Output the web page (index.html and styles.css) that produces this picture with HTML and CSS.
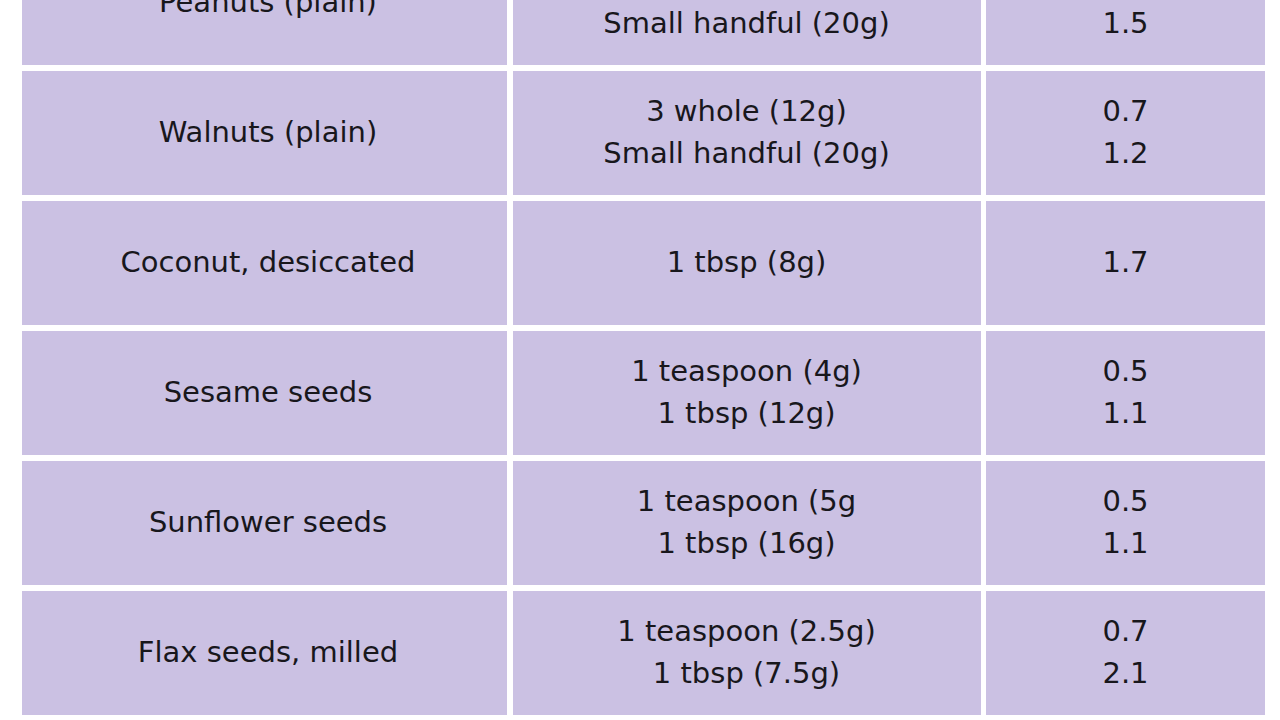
FILE: index.html
```html
<!DOCTYPE html>
<html lang="en">
<head>
<meta charset="utf-8">
<title>Nuts and seeds</title>
<link rel="stylesheet" href="styles.css">
</head>
<body>
<div class="table">
  <div class="cell name">Peanuts (plain)</div>
  <div class="cell"><span>10 whole (10g)</span><span>Small handful (20g)</span></div>
  <div class="cell"><span>0.8</span><span>1.5</span></div>

  <div class="cell name">Walnuts (plain)</div>
  <div class="cell"><span>3 whole (12g)</span><span>Small handful (20g)</span></div>
  <div class="cell"><span>0.7</span><span>1.2</span></div>

  <div class="cell name">Coconut, desiccated</div>
  <div class="cell">1 tbsp (8g)</div>
  <div class="cell">1.7</div>

  <div class="cell name">Sesame seeds</div>
  <div class="cell"><span>1 teaspoon (4g)</span><span>1 tbsp (12g)</span></div>
  <div class="cell"><span>0.5</span><span>1.1</span></div>

  <div class="cell name">Sunflower seeds</div>
  <div class="cell"><span>1 teaspoon (5g</span><span>1 tbsp (16g)</span></div>
  <div class="cell"><span>0.5</span><span>1.1</span></div>

  <div class="cell name">Flax seeds, milled</div>
  <div class="cell"><span>1 teaspoon (2.5g)</span><span>1 tbsp (7.5g)</span></div>
  <div class="cell"><span>0.7</span><span>2.1</span></div>
</div>
</body>
</html>
```
FILE: styles.css
```css
html, body {
  margin: 0;
  padding: 0;
  background: #ffffff;
  overflow: hidden;
}
body {
  font-family: "DejaVu Sans", "Noto Sans", sans-serif;
  color: #18171c;
}
.table {
  display: grid;
  grid-template-columns: 485px 468px 279px;
  grid-auto-rows: 124px;
  gap: 6px 5.5px;
  margin: -59px 0 0 22px;
}
.cell {
  background: #cbc1e3;
  display: flex;
  flex-direction: column;
  align-items: center;
  justify-content: center;
  text-align: center;
  font-size: 29px;
  line-height: 42px;
  padding-bottom: 3px;
}
.name {
  padding-left: 7px;
}
```
